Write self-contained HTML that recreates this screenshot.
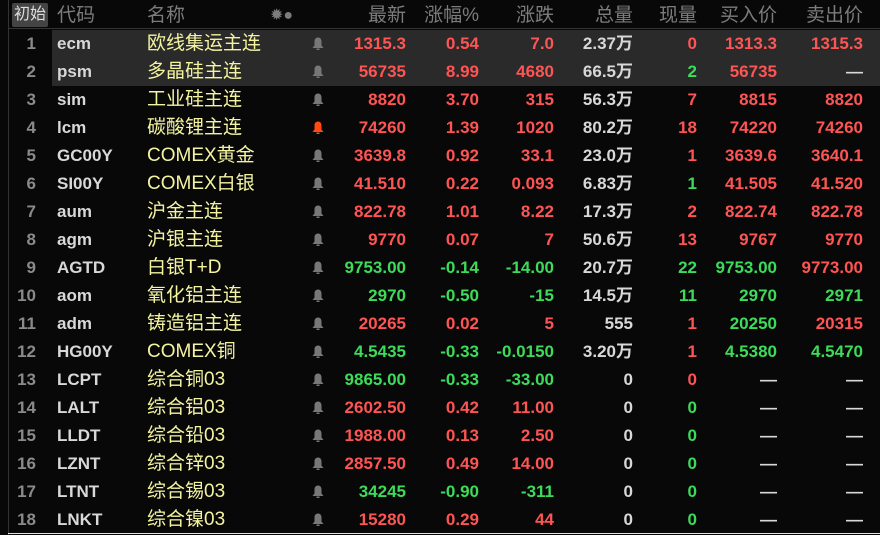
<!DOCTYPE html><html><head><meta charset="utf-8"><style>
body{margin:0;width:880px;height:535px;background:#080808;overflow:hidden;font-family:"Liberation Sans","Noto Sans CJK SC",sans-serif;position:relative}
.hd{position:absolute;top:0;height:30px;line-height:32px;color:#7c7c7c;font-size:19px}
.r{position:absolute;left:0;width:880px;height:28px;line-height:28px;font-size:17px;font-weight:bold}
.r span{position:absolute;white-space:nowrap}
.n{right:844px;color:#8a8a8a;text-align:right}
.c{left:57px;color:#d8d8d8}
.m{left:147px;color:#f4f4a0;font-weight:normal;font-size:19px}
.b{left:312px;top:7px;width:12px;height:14px}
.p{right:474px}.z{right:401px}.d{right:326px}.v{right:247px;color:#d8d8d8}.x{right:183px}.bu{right:103px}.s{right:17px}
.R{color:#ff5454}.G{color:#3cdc5a}.W{color:#d8d8d8}
.hl{background:#2a2a2a;left:52px;width:828px}
</style></head><body>
<div style="position:absolute;left:8px;top:0;width:1px;height:535px;background:#333"></div>
<div style="position:absolute;left:8px;top:28px;width:872px;height:1px;background:#333"></div>
<div style="position:absolute;left:8px;top:533px;width:872px;height:1px;background:#e8e8b0"></div>
<div style="position:absolute;left:12px;top:3px;width:36px;height:24px;background:#444;border-radius:2px;color:#ddd;font-size:16px;line-height:24px;text-align:center">初始</div>
<div class="hd" style="left:57px">代码</div>
<div class="hd" style="left:147px">名称</div>
<div class="hd" style="left:270px;font-size:16px">✹●</div>
<div class="hd" style="right:474px">最新</div>
<div class="hd" style="right:401px">涨幅%</div>
<div class="hd" style="right:326px">涨跌</div>
<div class="hd" style="right:247px">总量</div>
<div class="hd" style="right:183px">现量</div>
<div class="hd" style="right:103px">买入价</div>
<div class="hd" style="right:17px">卖出价</div>
<div style="position:absolute;top:30px;height:56px" class="hl"></div>
<svg width="0" height="0" style="position:absolute"><defs><symbol id="bell" viewBox="0 0 12 14"><path d="M6 0.5C3.8 .5 2.5 2.2 2.5 4.5V8.5L.5 11H11.5L9.5 8.5V4.5C9.5 2.2 8.2 .5 6 .5ZM4.5 11.5H7.5V13H4.5Z" fill="currentColor"/></symbol></defs></svg>
<div class="r" style="top:30px"><span class="n">1</span><span class="c">ecm</span><span class="m">欧线集运主连</span><svg class="b" style="color:#777;position:absolute"><use href="#bell"/></svg><span class="p R">1315.3</span><span class="z R">0.54</span><span class="d R">7.0</span><span class="v">2.37万</span><span class="x R">0</span><span class="bu R">1313.3</span><span class="s R">1315.3</span></div>
<div class="r" style="top:58px"><span class="n">2</span><span class="c">psm</span><span class="m">多晶硅主连</span><svg class="b" style="color:#777;position:absolute"><use href="#bell"/></svg><span class="p R">56735</span><span class="z R">8.99</span><span class="d R">4680</span><span class="v">66.5万</span><span class="x G">2</span><span class="bu R">56735</span><span class="s W">—</span></div>
<div class="r" style="top:86px"><span class="n">3</span><span class="c">sim</span><span class="m">工业硅主连</span><svg class="b" style="color:#777;position:absolute"><use href="#bell"/></svg><span class="p R">8820</span><span class="z R">3.70</span><span class="d R">315</span><span class="v">56.3万</span><span class="x R">7</span><span class="bu R">8815</span><span class="s R">8820</span></div>
<div class="r" style="top:114px"><span class="n">4</span><span class="c">lcm</span><span class="m">碳酸锂主连</span><svg class="b" style="color:#ff4a10;position:absolute"><use href="#bell"/></svg><span class="p R">74260</span><span class="z R">1.39</span><span class="d R">1020</span><span class="v">80.2万</span><span class="x R">18</span><span class="bu R">74220</span><span class="s R">74260</span></div>
<div class="r" style="top:142px"><span class="n">5</span><span class="c">GC00Y</span><span class="m">COMEX黄金</span><svg class="b" style="color:#777;position:absolute"><use href="#bell"/></svg><span class="p R">3639.8</span><span class="z R">0.92</span><span class="d R">33.1</span><span class="v">23.0万</span><span class="x R">1</span><span class="bu R">3639.6</span><span class="s R">3640.1</span></div>
<div class="r" style="top:170px"><span class="n">6</span><span class="c">SI00Y</span><span class="m">COMEX白银</span><svg class="b" style="color:#777;position:absolute"><use href="#bell"/></svg><span class="p R">41.510</span><span class="z R">0.22</span><span class="d R">0.093</span><span class="v">6.83万</span><span class="x G">1</span><span class="bu R">41.505</span><span class="s R">41.520</span></div>
<div class="r" style="top:198px"><span class="n">7</span><span class="c">aum</span><span class="m">沪金主连</span><svg class="b" style="color:#777;position:absolute"><use href="#bell"/></svg><span class="p R">822.78</span><span class="z R">1.01</span><span class="d R">8.22</span><span class="v">17.3万</span><span class="x R">2</span><span class="bu R">822.74</span><span class="s R">822.78</span></div>
<div class="r" style="top:226px"><span class="n">8</span><span class="c">agm</span><span class="m">沪银主连</span><svg class="b" style="color:#777;position:absolute"><use href="#bell"/></svg><span class="p R">9770</span><span class="z R">0.07</span><span class="d R">7</span><span class="v">50.6万</span><span class="x R">13</span><span class="bu R">9767</span><span class="s R">9770</span></div>
<div class="r" style="top:254px"><span class="n">9</span><span class="c">AGTD</span><span class="m">白银T+D</span><svg class="b" style="color:#777;position:absolute"><use href="#bell"/></svg><span class="p G">9753.00</span><span class="z G">-0.14</span><span class="d G">-14.00</span><span class="v">20.7万</span><span class="x G">22</span><span class="bu G">9753.00</span><span class="s R">9773.00</span></div>
<div class="r" style="top:282px"><span class="n">10</span><span class="c">aom</span><span class="m">氧化铝主连</span><svg class="b" style="color:#777;position:absolute"><use href="#bell"/></svg><span class="p G">2970</span><span class="z G">-0.50</span><span class="d G">-15</span><span class="v">14.5万</span><span class="x G">11</span><span class="bu G">2970</span><span class="s G">2971</span></div>
<div class="r" style="top:310px"><span class="n">11</span><span class="c">adm</span><span class="m">铸造铝主连</span><svg class="b" style="color:#777;position:absolute"><use href="#bell"/></svg><span class="p R">20265</span><span class="z R">0.02</span><span class="d R">5</span><span class="v">555</span><span class="x R">1</span><span class="bu G">20250</span><span class="s R">20315</span></div>
<div class="r" style="top:338px"><span class="n">12</span><span class="c">HG00Y</span><span class="m">COMEX铜</span><svg class="b" style="color:#777;position:absolute"><use href="#bell"/></svg><span class="p G">4.5435</span><span class="z G">-0.33</span><span class="d G">-0.0150</span><span class="v">3.20万</span><span class="x R">1</span><span class="bu G">4.5380</span><span class="s G">4.5470</span></div>
<div class="r" style="top:366px"><span class="n">13</span><span class="c">LCPT</span><span class="m">综合铜03</span><svg class="b" style="color:#777;position:absolute"><use href="#bell"/></svg><span class="p G">9865.00</span><span class="z G">-0.33</span><span class="d G">-33.00</span><span class="v">0</span><span class="x R">0</span><span class="bu W">—</span><span class="s W">—</span></div>
<div class="r" style="top:394px"><span class="n">14</span><span class="c">LALT</span><span class="m">综合铝03</span><svg class="b" style="color:#777;position:absolute"><use href="#bell"/></svg><span class="p R">2602.50</span><span class="z R">0.42</span><span class="d R">11.00</span><span class="v">0</span><span class="x G">0</span><span class="bu W">—</span><span class="s W">—</span></div>
<div class="r" style="top:422px"><span class="n">15</span><span class="c">LLDT</span><span class="m">综合铅03</span><svg class="b" style="color:#777;position:absolute"><use href="#bell"/></svg><span class="p R">1988.00</span><span class="z R">0.13</span><span class="d R">2.50</span><span class="v">0</span><span class="x G">0</span><span class="bu W">—</span><span class="s W">—</span></div>
<div class="r" style="top:450px"><span class="n">16</span><span class="c">LZNT</span><span class="m">综合锌03</span><svg class="b" style="color:#777;position:absolute"><use href="#bell"/></svg><span class="p R">2857.50</span><span class="z R">0.49</span><span class="d R">14.00</span><span class="v">0</span><span class="x G">0</span><span class="bu W">—</span><span class="s W">—</span></div>
<div class="r" style="top:478px"><span class="n">17</span><span class="c">LTNT</span><span class="m">综合锡03</span><svg class="b" style="color:#777;position:absolute"><use href="#bell"/></svg><span class="p G">34245</span><span class="z G">-0.90</span><span class="d G">-311</span><span class="v">0</span><span class="x G">0</span><span class="bu W">—</span><span class="s W">—</span></div>
<div class="r" style="top:506px"><span class="n">18</span><span class="c">LNKT</span><span class="m">综合镍03</span><svg class="b" style="color:#777;position:absolute"><use href="#bell"/></svg><span class="p R">15280</span><span class="z R">0.29</span><span class="d R">44</span><span class="v">0</span><span class="x G">0</span><span class="bu W">—</span><span class="s W">—</span></div>
</body></html>
